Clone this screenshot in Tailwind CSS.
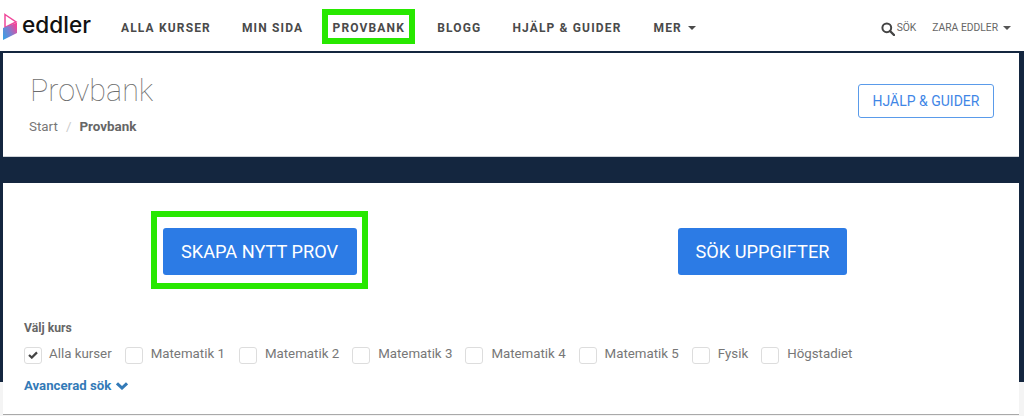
<!DOCTYPE html>
<html lang="en">
<head>
    <meta charset="UTF-8">
    <title>Eddler | Provbank</title>
    <script src="https://cdn.jsdelivr.net/npm/@tailwindcss/browser@4"></script>
</head>
<body class="font-['Roboto',sans-serif] bg-[#f4f4f4] h-[416px] overflow-hidden">
    <!-- Top nav -->
    <header class="h-[53px] bg-white border-b-2 border-[#14263f] flex items-center">
        <a href="#" class="flex items-center ml-[3px] w-[118px] h-[51px] shrink-0">
            <svg width="15" height="27" viewBox="0 0 15 27" class="mt-[2px] shrink-0">
                <defs>
                    <linearGradient id="logoGrad" x1="0" y1="1" x2="1" y2="0.3">
                        <stop offset="0" stop-color="#2fa4e7"/>
                        <stop offset="0.55" stop-color="#7d7fd0"/>
                        <stop offset="1" stop-color="#f0479a"/>
                    </linearGradient>
                </defs>
                <path d="M2 1.5 L13 8.8 L2 14.5 Z" fill="none" stroke="#f0479a" stroke-width="1.5"/>
                <path d="M0 15 L14 9.5 L14 20 L0 27 Z" fill="url(#logoGrad)"/>
            </svg>
            <span class="font-['Inter',sans-serif] text-[22.6px] font-medium text-[#111] leading-none ml-[4px]">eddler</span>
        </a>
        <nav class="flex items-center mt-[5px] text-[#4a4a4a] text-[12px] font-bold tracking-[1.15px] whitespace-nowrap">
            <a href="#">ALLA KURSER</a>
            <a href="#" class="ml-[31px]">MIN SIDA</a>
            <a href="#" class="ml-[19px] mb-[3px] pt-[3px] border-[6px] border-[#28e800] h-[35px] w-[93px] flex items-center justify-center">PROVBANK</a>
            <a href="#" class="ml-[22px]">BLOGG</a>
            <a href="#" class="ml-[31px]">HJÄLP &amp; GUIDER</a>
            <a href="#" class="ml-[32px] flex items-center gap-[6px]">MER <span class="w-0 h-0 border-x-[4.5px] border-x-transparent border-t-[4.5px] border-t-[#4a4a4a]"></span></a>
        </nav>
        <div class="ml-auto mr-[13px] mt-[4px] flex items-center text-[#666] text-[10.3px] whitespace-nowrap">
            <svg width="14" height="14" viewBox="0 0 14 14" class="mt-[3px]">
                <circle cx="5.8" cy="5.8" r="4.4" fill="none" stroke="#444" stroke-width="2"/>
                <path d="M9 9 L13 13" stroke="#444" stroke-width="2.4" stroke-linecap="round"/>
            </svg>
            <span class="ml-[2px]">SÖK</span>
            <span class="ml-[16px]">ZARA EDDLER</span>
            <span class="ml-[5px] w-0 h-0 border-x-[4px] border-x-transparent border-t-[4px] border-t-[#555]"></span>
        </div>
    </header>

    <!-- Page background is navy down to y=382 -->
    <main class="h-[363px] pl-[3px] pr-[5px] bg-[linear-gradient(#14263f_329px,#f4f4f4_329px)]">
        <section class="h-[104px] bg-white border-b border-[#cfd3d8] flex justify-between pl-[27px] pr-[25px]">
            <div>
                <h1 class="text-[30.5px] font-thin text-[#6d6d6d] leading-none mt-[23px]">Provbank</h1>
                <div class="flex text-[13.4px] leading-none mt-[13px] -ml-[1px] text-[#777]">
                    <span>Start</span>
                    <span class="ml-[8px] text-[#ccc]">/</span>
                    <span class="ml-[8px] font-bold text-[#666]">Provbank</span>
                </div>
            </div>
            <a href="#" class="mt-[31px] w-[136px] h-[34px] border border-[#5a9bea] rounded-[3px] text-[#3f86e6] text-[14px] flex items-center justify-center">HJÄLP &amp; GUIDER</a>
        </section>

        <section class="mt-[26px] h-[232px] bg-white border-b border-[#a9a9a9] pl-[21px]">
            <div class="flex items-center h-[137px]">
                <div class="ml-[127px] mt-[-3px] pt-[3px] border-[6px] border-[#28e800] w-[217px] h-[78px] flex items-center justify-center">
                    <button class="w-[194px] h-[47px] rounded-[3px] bg-[#2c7be5] text-white text-[18.2px]">SKAPA NYTT PROV</button>
                </div>
                <button class="ml-[310px] w-[169px] h-[47px] rounded-[3px] bg-[#2c7be5] text-white text-[18.2px]">SÖK UPPGIFTER</button>
            </div>
            <div class="text-[12.2px] font-bold text-[#666] leading-none mt-[2px]">Välj kurs</div>
            <div class="flex items-center mt-[11px] text-[13.3px] leading-[18px] text-[#777] whitespace-nowrap">
                <span class="w-[18px] h-[17px] border border-[#ddd] rounded-[3px] flex items-center justify-center">
                    <svg width="10" height="8" viewBox="0 0 10 8"><path d="M1 4 L3.8 6.6 L9 1.4" fill="none" stroke="#444" stroke-width="2.2"/></svg>
                </span>
                <span class="ml-[7px] mb-[2px]">Alla kurser</span>
                <span class="ml-[13px] w-[18px] h-[17px] border border-[#ddd] rounded-[3px]"></span>
                <span class="ml-[8px] mb-[2px]">Matematik 1</span>
                <span class="ml-[14px] w-[18px] h-[17px] border border-[#ddd] rounded-[3px]"></span>
                <span class="ml-[8px] mb-[2px]">Matematik 2</span>
                <span class="ml-[13px] w-[18px] h-[17px] border border-[#ddd] rounded-[3px]"></span>
                <span class="ml-[8px] mb-[2px]">Matematik 3</span>
                <span class="ml-[13px] w-[18px] h-[17px] border border-[#ddd] rounded-[3px]"></span>
                <span class="ml-[8px] mb-[2px]">Matematik 4</span>
                <span class="ml-[13px] w-[18px] h-[17px] border border-[#ddd] rounded-[3px]"></span>
                <span class="ml-[8px] mb-[2px]">Matematik 5</span>
                <span class="ml-[13px] w-[18px] h-[17px] border border-[#ddd] rounded-[3px]"></span>
                <span class="ml-[8px] mb-[2px]">Fysik</span>
                <span class="ml-[13px] w-[18px] h-[17px] border border-[#ddd] rounded-[3px]"></span>
                <span class="ml-[8px] mb-[2px]">Högstadiet</span>
            </div>
            <a href="#" class="flex items-center gap-[5px] mt-[11px] text-[13.2px] font-bold text-[#337ab7]">
                Avancerad sök
                <svg width="12" height="8" viewBox="0 0 12 8"><path d="M1 1.3 L6 6 L11 1.3" fill="none" stroke="#337ab7" stroke-width="3"/></svg>
            </a>
        </section>
    </main>
</body>
</html>
